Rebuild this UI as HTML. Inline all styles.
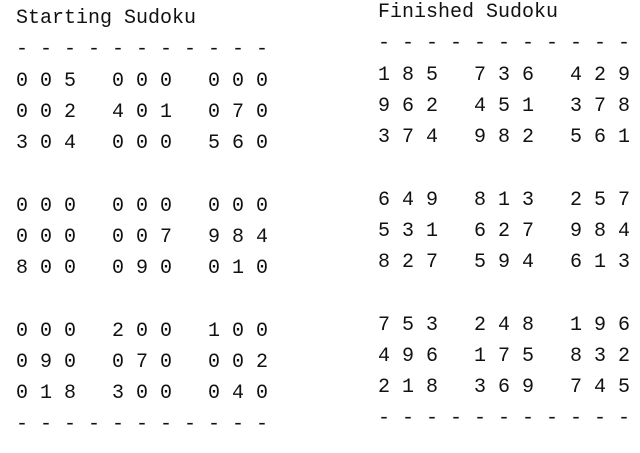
<!DOCTYPE html>
<html><head><meta charset="utf-8"><style>
html,body{margin:0;padding:0;background:#fff;width:640px;height:453px;overflow:hidden;position:relative}
pre{position:absolute;margin:0;font-family:"Liberation Mono",monospace;font-size:20px;line-height:31.25px;color:#111}
</style></head><body>
<pre style="left:16px;top:3px">Starting Sudoku
- - - - - - - - - - -
0 0 5   0 0 0   0 0 0
0 0 2   4 0 1   0 7 0
3 0 4   0 0 0   5 6 0

0 0 0   0 0 0   0 0 0
0 0 0   0 0 7   9 8 4
8 0 0   0 9 0   0 1 0

0 0 0   2 0 0   1 0 0
0 9 0   0 7 0   0 0 2
0 1 8   3 0 0   0 4 0
- - - - - - - - - - -</pre>
<pre style="left:378px;top:-3px">Finished Sudoku
- - - - - - - - - - -
1 8 5   7 3 6   4 2 9
9 6 2   4 5 1   3 7 8
3 7 4   9 8 2   5 6 1

6 4 9   8 1 3   2 5 7
5 3 1   6 2 7   9 8 4
8 2 7   5 9 4   6 1 3

7 5 3   2 4 8   1 9 6
4 9 6   1 7 5   8 3 2
2 1 8   3 6 9   7 4 5
- - - - - - - - - - -</pre>
</body></html>
